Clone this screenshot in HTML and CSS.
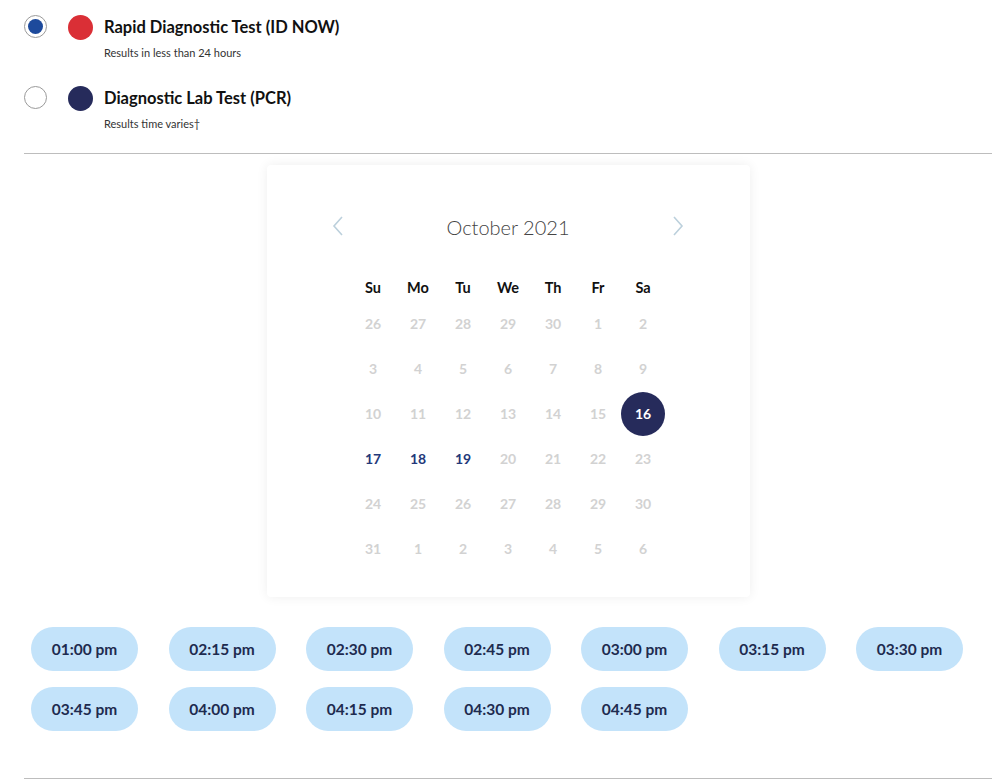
FILE: index.html
```html
<!DOCTYPE html>
<html lang="en">
<head>
    <meta charset="UTF-8">
    <meta name="viewport" content="width=device-width, initial-scale=1.0">
    <title>Book a Test</title>
    <link rel="stylesheet" href="styles.css">
</head>
<body>
    <div class="container">
        <div class="test-options">
            <div class="test-option">
                <div class="radio checked"></div>
                <div class="test-dot red"></div>
                <div class="test-text">
                    <div class="test-title">Rapid Diagnostic Test (ID NOW)</div>
                    <div class="test-note">Results in less than 24 hours</div>
                </div>
            </div>
            <div class="test-option">
                <div class="radio"></div>
                <div class="test-dot navy"></div>
                <div class="test-text">
                    <div class="test-title">Diagnostic Lab Test (PCR)</div>
                    <div class="test-note">Results time varies&dagger;</div>
                </div>
            </div>
        </div>

        <div class="calendar">
            <div class="calendar-header">
                <button class="nav-btn">
                    <svg width="12" height="20" viewBox="0 0 12 20"><path d="M10 1 L2 10 L10 19" fill="none" stroke="#bcd0dc" stroke-width="1.6"/></svg>
                </button>
                <div class="month">October 2021</div>
                <button class="nav-btn">
                    <svg width="12" height="20" viewBox="0 0 12 20"><path d="M2 1 L10 10 L2 19" fill="none" stroke="#bcd0dc" stroke-width="1.6"/></svg>
                </button>
            </div>
            <div class="weekdays">
                <div>Su</div><div>Mo</div><div>Tu</div><div>We</div><div>Th</div><div>Fr</div><div>Sa</div>
            </div>
            <div class="days">
                <div>26</div><div>27</div><div>28</div><div>29</div><div>30</div><div>1</div><div>2</div>
                <div>3</div><div>4</div><div>5</div><div>6</div><div>7</div><div>8</div><div>9</div>
                <div>10</div><div>11</div><div>12</div><div>13</div><div>14</div><div>15</div><div class="selected"><span>16</span></div>
                <div class="available">17</div><div class="available">18</div><div class="available">19</div><div>20</div><div>21</div><div>22</div><div>23</div>
                <div>24</div><div>25</div><div>26</div><div>27</div><div>28</div><div>29</div><div>30</div>
                <div>31</div><div>1</div><div>2</div><div>3</div><div>4</div><div>5</div><div>6</div>
            </div>
        </div>

        <div class="times">
            <button class="time">01:00 pm</button>
            <button class="time">02:15 pm</button>
            <button class="time">02:30 pm</button>
            <button class="time">02:45 pm</button>
            <button class="time">03:00 pm</button>
            <button class="time">03:15 pm</button>
            <button class="time">03:30 pm</button>
            <button class="time">03:45 pm</button>
            <button class="time">04:00 pm</button>
            <button class="time">04:15 pm</button>
            <button class="time">04:30 pm</button>
            <button class="time">04:45 pm</button>
        </div>
    </div>
</body>
</html>
```

FILE: styles.css
```css
body {
    font-family: Lato, "Liberation Sans", sans-serif;
    background-color: #fff;
    color: #1a1a1a;
    margin: 0;
}
.container {
    width: 968px;
    margin-left: 24px;
    padding-top: 14px;
}
.test-options {
    border-bottom: 1px solid #bdbdbd;
    padding-bottom: 23px;
}
.test-option {
    display: flex;
    align-items: flex-start;
    margin-bottom: 26px;
}
.test-option:last-child {
    margin-bottom: 0;
}
.radio {
    width: 23px;
    height: 23px;
    border: 1.5px solid #9a9a9a;
    border-radius: 50%;
    box-sizing: border-box;
    display: flex;
    align-items: center;
    justify-content: center;
    margin-top: 1px;
}
.radio.checked::after {
    content: "";
    width: 15px;
    height: 15px;
    border-radius: 50%;
    background-color: #1d4a9c;
}
.test-dot {
    width: 25px;
    height: 25px;
    border-radius: 50%;
    margin-left: 21px;
    margin-top: 1px;
}
.test-dot.red {
    background-color: #da2f36;
}
.test-dot.navy {
    background-color: #262b5b;
}
.test-text {
    margin-left: 11px;
}
.test-title {
    font-size: 16.5px;
    font-weight: bold;
    line-height: 26px;
    color: #111;
}
.test-note {
    font-size: 11px;
    color: #333;
    margin-top: 6px;
}
.calendar {
    width: 483px;
    margin: 11px auto 0;
    padding: 42px 0 26px;
    box-sizing: border-box;
    background-color: #fff;
    box-shadow: 0 0 12px rgba(0, 0, 0, 0.07);
    border-radius: 4px;
}
.calendar-header {
    display: flex;
    align-items: center;
    justify-content: space-between;
    width: 360px;
    height: 40px;
    margin: 0 auto;
}
.nav-btn {
    background: none;
    border: none;
    padding: 0;
    width: 20px;
    height: 24px;
    cursor: pointer;
}
.month {
    font-size: 20px;
    font-weight: 300;
    color: #444;
}
.weekdays,
.days {
    display: grid;
    grid-template-columns: repeat(7, 45px);
    width: 315px;
    margin: 0 auto;
    text-align: center;
}
.weekdays {
    margin-top: 27px;
    height: 27px;
    line-height: 27px;
    font-size: 14.5px;
    font-weight: bold;
    color: #111;
}
.days div {
    height: 45px;
    line-height: 45px;
    font-size: 14px;
    font-weight: bold;
    color: #d2d2d2;
}
.days .available {
    color: #24387a;
}
.days .selected span {
    display: inline-block;
    width: 44px;
    height: 44px;
    line-height: 44px;
    border-radius: 50%;
    background-color: #262b5b;
    color: #fff;
}
.times {
    display: flex;
    flex-wrap: wrap;
    gap: 16px 30.5px;
    padding: 30px 0 47px 7px;
    border-bottom: 1px solid #bdbdbd;
}
.time {
    width: 107px;
    height: 44px;
    border: none;
    border-radius: 22px;
    background-color: #c3e3fa;
    color: #1e2b4f;
    font-family: inherit;
    font-size: 15.5px;
    font-weight: bold;
    cursor: pointer;
}
```
